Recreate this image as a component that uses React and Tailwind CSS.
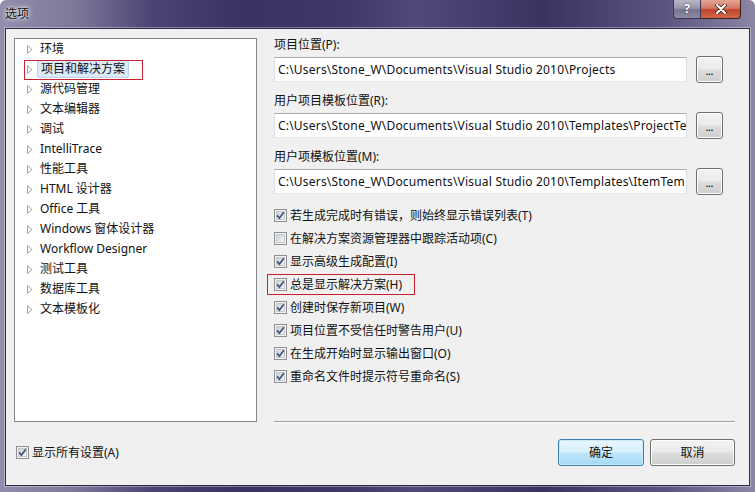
import React from 'react';

const tree = [
  '环境',
  '项目和解决方案',
  '源代码管理',
  '文本编辑器',
  '调试',
  'IntelliTrace',
  '性能工具',
  'HTML 设计器',
  'Office 工具',
  'Windows 窗体设计器',
  'Workflow Designer',
  '测试工具',
  '数据库工具',
  '文本模板化',
];

const paths = [
  ['项目位置(P):', 'C:\\Users\\Stone_W\\Documents\\Visual Studio 2010\\Projects'],
  ['用户项目模板位置(R):', 'C:\\Users\\Stone_W\\Documents\\Visual Studio 2010\\Templates\\ProjectTe'],
  ['用户项模板位置(M):', 'C:\\Users\\Stone_W\\Documents\\Visual Studio 2010\\Templates\\ItemTem'],
];

const options = [
  ['若生成完成时有错误，则始终显示错误列表(T)', true],
  ['在解决方案资源管理器中跟踪活动项(C)', false],
  ['显示高级生成配置(I)', true],
  ['总是显示解决方案(H)', true, true],
  ['创建时保存新项目(W)', true],
  ['项目位置不受信任时警告用户(U)', true],
  ['在生成开始时显示输出窗口(O)', true],
  ['重命名文件时提示符号重命名(S)', true],
];

function Check({ on }) {
  return (
    <svg width="13" height="13" viewBox="0 0 13 13" className="shrink-0">
      <defs>
        <linearGradient id="cbg" x1="0" y1="0" x2="1" y2="1">
          <stop offset="0" stopColor="#cbcfd5" />
          <stop offset="1" stopColor="#f7f7f7" />
        </linearGradient>
      </defs>
      <rect x="0.5" y="0.5" width="12" height="12" fill="#f4f4f4" stroke="#8e8f8f" />
      <rect x="2.5" y="2.5" width="8" height="8" fill="url(#cbg)" stroke="#c4c7cc" />
      {on && (
        <path d="M3.2 6.4 L5.4 9.2 L9.8 3.2" fill="none" stroke="#3d5183" strokeWidth="1.7" />
      )}
    </svg>
  );
}

function Arrow() {
  return (
    <svg width="6" height="9" viewBox="0 0 6 9" className="shrink-0">
      <path d="M0.5 0.5 L5 4.5 L0.5 8.5 Z" fill="#fff" stroke="#a5a5a5" />
    </svg>
  );
}

function Btn({ children, def, className }) {
  return (
    <div
      className={`flex items-center justify-center rounded-[3px] border ${
        def
          ? 'border-[#3c7fb1] bg-[linear-gradient(180deg,#eaf6fd_0%,#d9f0fc_48%,#bee6fd_52%,#a7d9f5_100%)] shadow-[inset_0_0_0_1px_#c8eafa]'
          : 'border-[#707070] bg-[linear-gradient(180deg,#f2f2f2_0%,#ebebeb_48%,#dddddd_52%,#cfcfcf_100%)] shadow-[inset_0_0_0_1px_#fcfcfc]'
      } ${className}`}
    >
      {children}
    </div>
  );
}

export default function App() {
  return (
    <div className="w-[755px] h-[492px] overflow-hidden flex flex-col rounded-t-[6px] bg-[linear-gradient(90deg,#928dab_0%,#7d7899_10%,#4c4474_20%,#3b3163_32%,#403668_45%,#514979_55%,#3b3262_72%,#5b5481_88%,#8c86a5_100%)] font-['Noto_Sans','Noto_Sans_CJK_SC',sans-serif] text-[12px] text-[#111]">
      <div className="h-[28px] flex items-start justify-between shrink-0">
        <div className="pl-[5px] pt-[6px] leading-[16px] text-[12px] text-[#111] [text-shadow:0_0_6px_#fff,0_0_3px_#fff]">选项</div>
        <div className="flex mr-[14px]">
          <div className="w-[28px] h-[19px] rounded-bl-[4px] border border-t-0 border-[#3c3655] bg-[linear-gradient(180deg,#b9b7c6_0%,#9896ab_45%,#77748e_55%,#8e8ba3_100%)] flex items-center justify-center text-white font-bold text-[12px] leading-none [text-shadow:0_0_2px_#333]">
            ?
          </div>
          <div className="w-[40px] h-[19px] rounded-br-[4px] border border-t-0 border-l-0 border-[#3c1c1c] bg-[linear-gradient(180deg,#e5a696_0%,#d57863_45%,#c0432a_55%,#d26a4c_100%)] flex items-center justify-center">
            <svg width="12" height="10" viewBox="0 0 12 10">
              <path d="M2 1 L10 9 M10 1 L2 9" stroke="#3d1a14" strokeWidth="3.6" strokeLinecap="round" />
              <path d="M2 1 L10 9 M10 1 L2 9" stroke="#fff" strokeWidth="2.2" strokeLinecap="round" />
            </svg>
          </div>
        </div>
      </div>

      <div className="mx-[5px] mb-[6px] flex-1 flex flex-col border border-[#2d2748] bg-[#f0f0f0] shadow-[0_0_0_1px_rgba(255,255,255,0.35)]">
        <div className="flex">
          <div className="relative mt-[9px] ml-[8px] w-[243px] h-[384px] border border-[#828790] bg-white pl-[12px]">
            {tree.map((t, i) => (
              <div key={t} className="h-[20px] flex items-center">
                <Arrow />
                <span
                  className={`ml-[4px] leading-[16px] px-[3px] ${
                    i === 1 ? 'bg-[#dce9f7] border border-[#b8d1ee] rounded-[2px] -my-px' : ''
                  }`}
                >
                  {t}
                </span>
              </div>
            ))}
            <div className="absolute left-[9px] top-[21px] w-[119px] h-[20px] border border-[#c8202e]" />
          </div>

          <div className="mt-[7px] ml-[17px] w-[461px] h-[387px] flex flex-col">
            {paths.map(([label, value], i) => (
              <div key={label} className={i ? 'mt-[10px]' : ''}>
                <div className="h-[18px] leading-[18px]">{label}</div>
                <div className="mt-[3px] h-[25px] flex items-center">
                  <div className="w-[413px] h-[25px] bg-white border border-[#abadb3] border-b-[#e3e9ef] border-x-[#dbdfe6] px-[3px] overflow-hidden whitespace-nowrap leading-[23px] tracking-[0.2px]">
                    {value}
                  </div>
                  <Btn className="ml-[9px] w-[27px] h-[27px] text-[9px] font-bold leading-none pt-[3px]">...</Btn>
                </div>
              </div>
            ))}

            <div className="mt-[10px]">
              {options.map(([label, on, mark]) => (
                <div key={label} className="relative h-[23px] flex items-center">
                  <Check on={on} />
                  <span className="ml-[3px] leading-[16px]">{label}</span>
                  {mark && (
                    <div className="absolute left-[-7px] top-[1px] w-[148px] h-[21px] border border-[#c8202e]" />
                  )}
                </div>
              ))}
            </div>

            <div className="mt-auto h-[2px] border-t border-[#a0a0a0] border-b border-b-white" />
          </div>
        </div>

        <div className="mt-[16px] flex items-center">
          <div className="ml-[10px] flex items-center">
            <Check on />
            <span className="ml-[3px] leading-[16px]">显示所有设置(A)</span>
          </div>
          <div className="ml-auto mr-[14px] flex">
            <Btn def className="w-[86px] h-[27px]">确定</Btn>
            <Btn className="ml-[6px] w-[85px] h-[27px]">取消</Btn>
          </div>
        </div>
      </div>
    </div>
  );
}
